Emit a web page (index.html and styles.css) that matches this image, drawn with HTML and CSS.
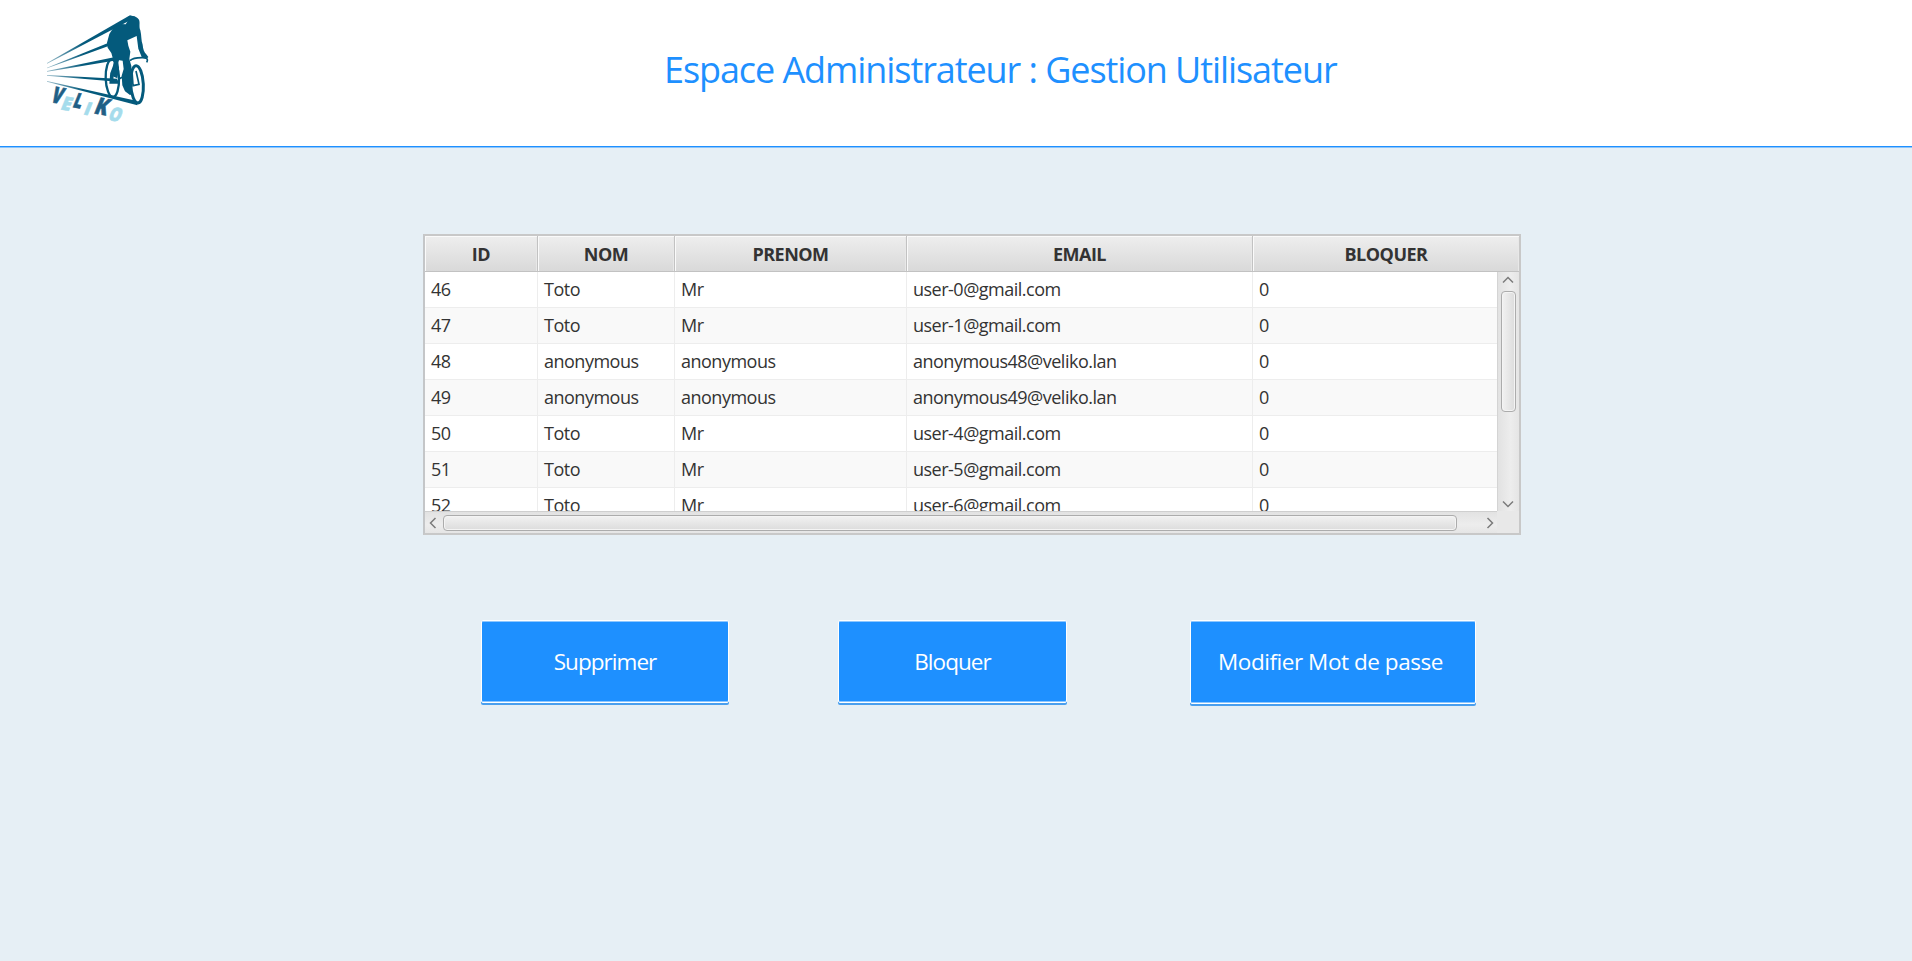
FILE: index.html
```
<!DOCTYPE html>
<html lang="fr">
<head>
<meta charset="utf-8">
<title>Espace Administrateur</title>
<link rel="stylesheet" href="styles.css">
</head>
<body>
<header class="header">
  <svg class="logo" viewBox="0 0 420 435" aria-label="Veliko">
    <defs>
      <linearGradient id="fade" gradientUnits="userSpaceOnUse" x1="50" y1="0" x2="160" y2="0">
        <stop offset="0" stop-color="#045a7c" stop-opacity=".4"/>
        <stop offset="1" stop-color="#045a7c"/>
      </linearGradient>
    </defs>
    <g fill="url(#fade)">
      <path d="M51 189L300 46L316 50L298 62L51 191Z"/>
      <path d="M51 203L236 128L236 138L51 205Z"/>
      <path d="M51 213L252 172L252 182L51 215Z"/>
      <path d="M51 225L262 236L262 245L51 227Z"/>
      <path d="M51 243L322 303L322 316L51 245Z"/>
    </g>
    <g fill="none" stroke="#045a7c">
      <ellipse cx="247" cy="235" rx="20" ry="56" stroke-width="7" transform="rotate(-2 247 235)"/>
      <ellipse cx="321" cy="253" rx="19" ry="56" stroke-width="9" transform="rotate(-3 321 253)"/>
      <path d="M306 213L309 257L327 253L318 213M254 176L268 236L300 220M300 182Q310 171 346 173Q356 177 350 187" stroke-width="5"/>
      <path d="M263 176L246 221L244 246L270 246" stroke-width="11"/>
    </g>
    <path fill="#045a7c" d="M295 50C305 45 322 49 327 59C331 68 326 79 331 91C335 107 333 122 338 134C339 146 342 157 350 164L355 171L349 178L336 173L325 146L320 108L292 121L295 137L301 155L298 177L304 198L305 234L300 266L309 281L300 285L285 274L277 256L275 227L281 207L278 182L264 180L267 203L262 235L248 229L251 184L244 159L233 143L231 128L238 102L250 83L272 72L287 73L292 65Z"/>
    <g class="logo-letters">
      <g class="logo-dark">
        <text transform="translate(59 306) rotate(10) skewX(-12)" font-size="68" textLength="32" lengthAdjust="spacingAndGlyphs">V</text>
        <text transform="translate(125 321) rotate(10) skewX(-12)" font-size="63" textLength="26" lengthAdjust="spacingAndGlyphs">L</text>
        <text transform="translate(189 340) rotate(10) skewX(-12)" font-size="70" textLength="39" lengthAdjust="spacingAndGlyphs">K</text>
      </g>
      <g class="logo-light">
        <text transform="translate(89 328) rotate(10) skewX(-12)" font-size="57" textLength="29" lengthAdjust="spacingAndGlyphs">E</text>
        <text transform="translate(158 343) rotate(10) skewX(-12)" font-size="54" textLength="18" lengthAdjust="spacingAndGlyphs">I</text>
        <text transform="translate(232 359) rotate(10) skewX(-12)" font-size="57" textLength="37" lengthAdjust="spacingAndGlyphs">O</text>
      </g>
    </g>
  </svg>
  <h1 class="title">Espace Administrateur : Gestion Utilisateur</h1>
</header>
<main class="main">
  <section class="table">
    <div class="row head"><span>ID</span><span>NOM</span><span>PRENOM</span><span>EMAIL</span><span>BLOQUER</span></div>
    <div class="viewport">
      <div class="rows">
        <div class="row"><span>46</span><span>Toto</span><span>Mr</span><span>user-0@gmail.com</span><span>0</span></div>
        <div class="row"><span>47</span><span>Toto</span><span>Mr</span><span>user-1@gmail.com</span><span>0</span></div>
        <div class="row"><span>48</span><span>anonymous</span><span>anonymous</span><span>anonymous48@veliko.lan</span><span>0</span></div>
        <div class="row"><span>49</span><span>anonymous</span><span>anonymous</span><span>anonymous49@veliko.lan</span><span>0</span></div>
        <div class="row"><span>50</span><span>Toto</span><span>Mr</span><span>user-4@gmail.com</span><span>0</span></div>
        <div class="row"><span>51</span><span>Toto</span><span>Mr</span><span>user-5@gmail.com</span><span>0</span></div>
        <div class="row"><span>52</span><span>Toto</span><span>Mr</span><span>user-6@gmail.com</span><span>0</span></div>
      </div>
      <div class="vbar">
        <svg class="arrow-v" viewBox="0 0 12 8"><path d="M1 6.5L6 1.5L11 6.5"/></svg>
        <div class="vthumb"></div>
        <svg class="arrow-v arrow-down" viewBox="0 0 12 8"><path d="M1 1.5L6 6.5L11 1.5"/></svg>
      </div>
    </div>
    <div class="bottom">
      <div class="hbar">
        <svg class="arrow-h" viewBox="0 0 8 12"><path d="M6.5 1L1.5 6L6.5 11"/></svg>
        <div class="hthumb"></div>
        <svg class="arrow-h arrow-right" viewBox="0 0 8 12"><path d="M1.5 1L6.5 6L1.5 11"/></svg>
      </div>
      <div class="corner"></div>
    </div>
  </section>
  <div class="actions">
    <button class="btn delete">Supprimer</button>
    <button class="btn block">Bloquer</button>
    <button class="btn password">Modifier Mot de passe</button>
  </div>
</main>
</body>
</html>
```
FILE: styles.css
```
* { box-sizing: border-box; }
body {
  margin: 0;
  height: 961px;
  overflow: hidden;
  background: #e6eff5;
  font-family: "Open Sans", "Noto Sans", sans-serif;
  color: #333;
}
.header {
  display: flex;
  height: 147px;
  background: #fff;
  border-bottom: 1px solid #1e90ff;
  box-shadow: 0 1px #8cc5fc;
}
.logo { width: 140px; height: 145px; margin-left: 30px; flex: none; }
.logo-letters { font-family: "Open Sans", sans-serif; font-weight: 800; stroke-width: 2; }
.logo-dark { fill: #1f5f86; stroke: #1f5f86; }
.logo-light { fill: #a5dcec; stroke: #a5dcec; }
.title {
  margin: 45px 0 0 494px;
  font-size: 36px;
  line-height: 50px;
  font-weight: 400;
  letter-spacing: -1.08px;
  color: #1e90ff;
  white-space: nowrap;
}
.main { padding: 87px 0 0 423px; }
.table {
  width: 1098px;
  height: 301px;
  border: 2px solid #c8c8c8;
  border-left-color: #c4c6c8;
  background: #fff;
}
.row {
  display: grid;
  grid-template-columns: 113px 137px 232px 346px 1fr;
  height: 36px;
}
.row span {
  padding-left: 6px;
  border-right: 1px solid #ededed;
  border-bottom: 1px solid #ededed;
  font-size: 18px;
  line-height: 35px;
  letter-spacing: -0.5px;
  white-space: nowrap;
}
.row span:last-child { border-right: 0; }
.rows .row:nth-child(even) { background: #f9f9f9; }
.row.head span {
  padding: 2px 0 0;
  text-align: center;
  font-weight: 700;
  line-height: 33px;
  letter-spacing: -0.5px;
  border-right-color: #c2c2c2;
  border-bottom-color: #c2c2c2;
  background: linear-gradient(#eee, #d9d9d9);
  box-shadow: inset 1px 1px #fafafa, inset -1px 0 #e8e8e8;
}
.viewport { display: flex; height: 239px; }
.rows { width: 1072px; overflow: hidden; }
.vbar {
  display: flex;
  flex-direction: column;
  align-items: center;
  width: 22px;
  padding-right: 1px;
  border-left: 1px solid #d4d4d4;
  background: linear-gradient(90deg, #e2e2e2, #ededed 60%, #e5e5e5);
}
.arrow-v { width: 12px; height: 8px; margin-top: 4px; flex: none; }
.arrow-h { width: 8px; height: 12px; margin-left: 4px; flex: none; }
.arrow-v path, .arrow-h path { fill: none; stroke: #7b7b7b; stroke-width: 1.5; }
.vthumb {
  width: 15px;
  height: 121px;
  margin-top: 7px;
  border: 1px solid #acacac;
  border-radius: 4px;
  background: linear-gradient(90deg, #f2f2f2, #dcdcdc);
  box-shadow: inset 0 0 0 1px #f4f4f4;
}
.arrow-down { margin-top: auto; margin-bottom: 3px; }
.bottom { display: flex; height: 22px; }
.hbar {
  display: flex;
  align-items: center;
  width: 1072px;
  border-top: 1px solid #cfcfcf;
  background: linear-gradient(#e2e2e2, #ededed 60%, #e5e5e5);
}
.hthumb {
  width: 1014px;
  height: 16px;
  margin-left: 6px;
  border: 1px solid #acacac;
  border-radius: 4px;
  background: linear-gradient(#f2f2f2, #dcdcdc);
  box-shadow: inset 0 0 0 1px #f4f4f4;
}
.arrow-right { margin-left: auto; margin-right: 3px; }
.corner { flex: 1; background: #e8e8e8; }
.actions { display: flex; align-items: flex-start; padding: 85px 0 0 58px; }
.btn {
  height: 83px;
  padding: 0;
  border: 1px solid #fff;
  border-radius: 2px;
  background: #1e90ff;
  box-shadow: inset 0 1px #8ec7ff, inset 0 -1px #8ec7ff, 0 2px #4a9fee;
  color: #fff;
  font-family: inherit;
  font-size: 22.5px;
  line-height: 30px;
  letter-spacing: -0.95px;
  white-space: nowrap;
}
.delete { width: 248px; }
.block { width: 229px; margin-left: 109px; }
.password {
  width: 286px;
  height: 84px;
  margin-left: 123px;
  padding-right: 5px;
  padding-bottom: 1px;
  letter-spacing: -0.45px;
}
```
